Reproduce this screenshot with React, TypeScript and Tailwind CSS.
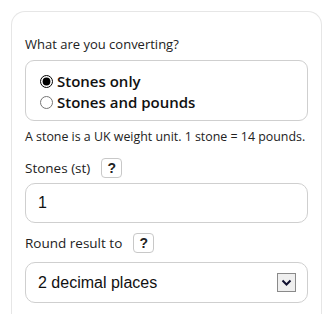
import React, { useState } from 'react';

const ui = { fontFamily: '"Open Sans", "Noto Sans", sans-serif' };
const field = { fontFamily: '"Liberation Sans", Arial, sans-serif' };

function HelpButton() {
  return (
    <button
      type="button"
      className="ml-[11px] flex h-[20px] w-[21px] items-center justify-center rounded-[4px] border border-[#c8c8c8] bg-white text-[14px] font-bold leading-none text-[#222]"
      style={field}
    >
      ?
    </button>
  );
}

export default function App() {
  const [mode, setMode] = useState('stones');
  const [stones, setStones] = useState('1');

  return (
    <div className="h-[314px] overflow-hidden bg-white px-[11px] pt-[11px]" style={ui}>
      <div className="h-[320px] rounded-t-[14px] border border-b-0 border-[#e6e6e6] px-[13px] pt-[22px] text-[#222]">
        <div className="text-[13px] leading-[20px]">What are you converting?</div>

        <div className="mt-[6px] h-[61px] rounded-[9px] border border-[#cfcfcf] px-[14px] pt-[10px]">
          {[
            ['stones', 'Stones only'],
            ['pounds', 'Stones and pounds'],
          ].map(([value, label]) => (
            <label key={value} className="flex h-[21px] items-center text-[15px] font-semibold leading-[21px] text-[#111]">
              <input
                type="radio"
                name="mode"
                checked={mode === value}
                onChange={() => setMode(value)}
                className="m-0 mr-[4px] h-[13px] w-[13px] accent-black"
              />
              {label}
            </label>
          ))}
        </div>

        <p className="mt-[6px] whitespace-nowrap text-[12.4px] leading-[20px]">
          A stone is a UK weight unit. 1 stone = 14 pounds.
        </p>

        <div className="mt-[11px] flex items-center">
          <span className="text-[13.5px] leading-[20px]">Stones (st)</span>
          <HelpButton />
        </div>

        <input
          value={stones}
          onChange={(e) => setStones(e.target.value)}
          className="mt-[5px] block h-[40px] w-full rounded-[10px] border border-[#cfcfcf] px-[12px] text-[16px] text-[#111] outline-none"
          style={field}
        />

        <div className="mt-[10px] flex items-center">
          <span className="text-[13.5px] leading-[20px]">Round result to</span>
          <HelpButton />
        </div>

        <div
          className="mt-[9px] flex h-[41px] items-center justify-between rounded-[10px] border border-[#cfcfcf] pl-[12px] pr-[11px] text-[16px] text-[#111]"
          style={field}
        >
          <span>2 decimal places</span>
          <span className="flex h-[19px] w-[19px] items-center justify-center border border-[#8a8a8a] bg-[#efefef]">
            <svg width="11" height="8" viewBox="0 0 11 8">
              <path d="M1.5 1.5 L5.5 5.5 L9.5 1.5" fill="none" stroke="#101030" strokeWidth="2" />
            </svg>
          </span>
        </div>
      </div>
    </div>
  );
}
